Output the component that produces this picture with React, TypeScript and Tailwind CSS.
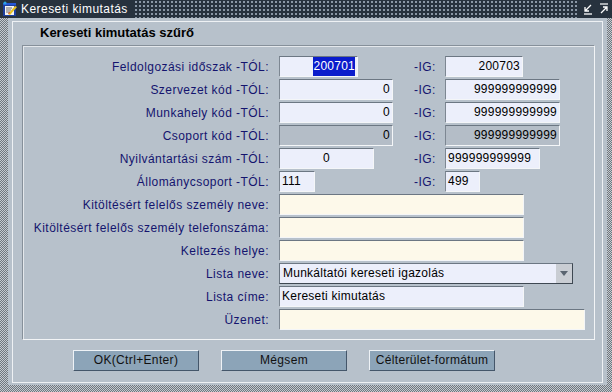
import React from "react";

const font = "font-['Liberation_Sans',Arial,sans-serif]";

function TitleIcon() {
  return (
    <svg width="16" height="16" viewBox="0 0 16 16" className="shrink-0">
      <rect x="1" y="2" width="13" height="13" fill="#1d3f9e" />
      <rect x="3" y="5" width="9" height="9" fill="#f4f4f4" />
      <rect x="1" y="2" width="13" height="2" fill="#2456d6" />
      <path d="M4 7h6M4 9h5M4 11h4" stroke="#6b6b6b" strokeWidth="1" />
      <path d="M6 13l7-8 2 1-7 8z" fill="#e8c020" />
      <path d="M6 13l1-2 1 1z" fill="#d02020" />
      <circle cx="3" cy="2" r="1.6" fill="#2aa0e0" />
    </svg>
  );
}

function Field({
  className,
  value,
  align = "right",
  tone = "blue",
  selected,
}: {
  className: string;
  value?: string;
  align?: "left" | "right" | "center";
  tone?: "blue" | "cream" | "off";
  selected?: boolean;
}) {
  const bg =
    tone === "cream" ? "bg-[#fdf9ea]" : tone === "off" ? "bg-[#b4bdc7] text-[#3c3c3c]" : "bg-[#eceffb]";
  const al = align === "left" ? "justify-start" : align === "center" ? "justify-center" : "justify-end";
  return (
    <div
      className={`h-[21px] flex items-center ${al} ${bg} ${className} border-t border-l border-t-[#6c7783] border-l-[#7d8792] border-r border-b border-r-[#f4f6f8] border-b-[#f4f6f8] px-[2px] text-black text-[12px] tracking-[0.25px] leading-[19px] overflow-hidden whitespace-nowrap`}
    >
      {selected ? <span className="bg-[#0a1ccc] text-white">{value}</span> : value}
    </div>
  );
}

function Row({ label, children }: { label: string; children: React.ReactNode }) {
  return (
    <div className="flex items-center h-[21px]">
      <div className="w-[246px] text-right text-[#14146e] text-[12px] tracking-[0.45px] whitespace-nowrap">{label}</div>
      <div className="ml-[10px] flex items-center">{children}</div>
    </div>
  );
}

function Range({
  label,
  from,
  to,
}: {
  label: string;
  from: React.ReactNode;
  to: React.ReactNode;
}) {
  return (
    <Row label={label}>
      <div className="w-[135px] flex">{from}</div>
      <div className="w-[31px] text-[#14146e] text-[12px] tracking-[0.45px]">-IG:</div>
      {to}
    </Row>
  );
}

function Btn({ children }: { children: React.ReactNode }) {
  return (
    <button className="w-[126px] h-[21px] bg-[#8ca4b8] border-t border-l border-t-[#eef2f6] border-l-[#eef2f6] border-r border-b border-r-[#44566a] border-b-[#44566a] text-[12px] tracking-[0.35px] text-[#111] leading-[19px]">
      {children}
    </button>
  );
}

export default function App() {
  return (
    <div
      className={`${font} w-[612px] h-[392px] flex flex-col overflow-hidden bg-[#8e959c] bg-[repeating-conic-gradient(#6f777f_0%_25%,#c4cad0_0%_50%)] bg-[length:2px_2px]`}
    >
      {/* title bar */}
      <div className="h-[18px] flex items-center bg-[#27323e] text-white">
        <div className="flex items-center pl-[2px] pr-[6px] h-full bg-[#27323e]">
          <TitleIcon />
          <span className="ml-[3px] text-[12px] tracking-[0.45px] leading-[18px]">Kereseti kimutatás</span>
        </div>
        <div className="flex-1 h-full bg-[radial-gradient(circle,#8a97a6_0.9px,transparent_1.1px)] bg-[length:4px_4px]" />
        <div className="flex items-center gap-[6px] pl-[6px] pr-[3px] h-full">
          <svg width="10" height="12" viewBox="0 0 10 12">
            <path d="M8 2L2 8M2 4v4h4" stroke="#fff" strokeWidth="1.3" fill="none" />
            <path d="M1 11h8" stroke="#fff" strokeWidth="1.3" />
          </svg>
          <svg width="10" height="12" viewBox="0 0 10 12">
            <path d="M1 1h8" stroke="#fff" strokeWidth="1.2" />
            <path d="M2 10L8 4M4 4h4v4" stroke="#fff" strokeWidth="1.3" fill="none" />
          </svg>
        </div>
      </div>

      {/* window body */}
      <div className="flex-1 flex flex-col pl-[8px] pr-[5px] pb-[7px]">
        <div className="flex-1 flex flex-col bg-[#b7c1cb] pt-[3px] px-[4px] pb-[2px]">
          <div className="flex-1 flex flex-col border border-[#eef1f4]">
            <div className="h-[23px] pl-[27px] pt-[2px] text-[13px] font-bold text-black leading-[17px]">
              Kereseti kimutatás szűrő
            </div>

            <div className="ml-[9px] mr-[7px] border-t border-l border-t-[#86909a] border-l-[#86909a] border-r border-b border-r-[#f2f4f6] border-b-[#f2f4f6] shadow-[inset_1px_1px_0_#e4e8ec] pt-[10px] pb-[9px] flex flex-col gap-[2px]">
              <Range
                label="Feldolgozási időszak -TÓL:"
                from={<Field className="w-[79px]" value="200701" selected />}
                to={<Field className="w-[78px]" value="200703" />}
              />
              <Range
                label="Szervezet kód -TÓL:"
                from={<Field className="w-[114px]" value="0" />}
                to={<Field className="w-[115px]" value="999999999999" />}
              />
              <Range
                label="Munkahely kód -TÓL:"
                from={<Field className="w-[114px]" value="0" />}
                to={<Field className="w-[115px]" value="999999999999" />}
              />
              <Range
                label="Csoport kód -TÓL:"
                from={<Field className="w-[114px]" value="0" tone="off" />}
                to={<Field className="w-[115px]" value="999999999999" tone="off" />}
              />
              <Range
                label="Nyilvántartási szám -TÓL:"
                from={<Field className="w-[95px]" value="0" align="center" />}
                to={<Field className="w-[95px]" value="999999999999" align="left" />}
              />
              <Range
                label="Állománycsoport -TÓL:"
                from={<Field className="w-[36px]" value="111" align="left" />}
                to={<Field className="w-[35px]" value="499" align="left" />}
              />
              <Row label="Kitöltésért felelős személy neve:">
                <Field className="w-[245px]" tone="cream" />
              </Row>
              <Row label="Kitöltésért felelős személy telefonszáma:">
                <Field className="w-[245px]" tone="cream" />
              </Row>
              <Row label="Keltezés helye:">
                <Field className="w-[245px]" tone="cream" />
              </Row>
              <Row label="Lista neve:">
                <div className="w-[294px] h-[21px] flex bg-[#eceffb] border-t border-l border-t-[#6c7783] border-l-[#6c7783] border-r border-b border-r-[#3e4852] border-b-[#3e4852] text-[12px] tracking-[0.25px] text-black">
                  <div className="flex-1 pl-[3px] leading-[19px] whitespace-nowrap">Munkáltatói kereseti igazolás</div>
                  <div className="w-[16px] bg-[#c9cdd3] flex items-center justify-center">
                    <svg width="8" height="5" viewBox="0 0 8 5">
                      <path d="M0 0h8L4 5z" fill="#5a6470" />
                    </svg>
                  </div>
                </div>
              </Row>
              <Row label="Lista címe:">
                <Field className="w-[245px]" value="Kereseti kimutatás" align="left" />
              </Row>
              <Row label="Üzenet:">
                <Field className="w-[306px]" tone="cream" />
              </Row>
            </div>

            <div className="flex gap-[22px] pl-[60px] pt-[10px]">
              <Btn>OK(Ctrl+Enter)</Btn>
              <Btn>Mégsem</Btn>
              <Btn>Célterület-formátum</Btn>
            </div>
          </div>
        </div>
      </div>
    </div>
  );
}
